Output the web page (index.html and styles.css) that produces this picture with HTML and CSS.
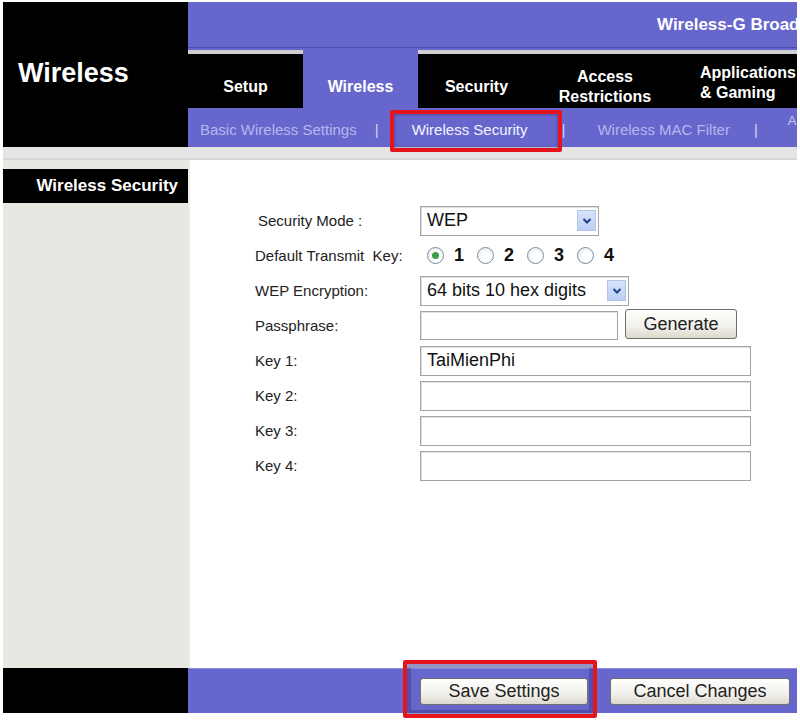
FILE: index.html
```html
<!DOCTYPE html>
<html lang="en">
<head>
<meta charset="utf-8">
<title>Wireless Security</title>
<link rel="stylesheet" href="styles.css">
</head>
<body>
<div class="frame">
  <header class="hdr">
    <div class="brand">Wireless</div>
    <div class="hdr-right">
      <div class="topbar"><span class="product">Wireless-G Broadband Router</span></div>
      <nav class="tabs">
        <div class="tab dark t-setup">Setup</div>
        <div class="tab active t-wireless">Wireless</div>
        <div class="tab dark t-security">Security</div>
        <div class="tab dark t-access">Access<br>Restrictions</div>
        <div class="tab dark t-apps">Applications<br>&amp; Gaming</div>
      </nav>
      <div class="subnav">
        <span class="sub s1">Basic Wireless Settings</span>
        <span class="sep p1">|</span>
        <span class="sub cur">Wireless Security</span>
        <span class="sep p2">|</span>
        <span class="sub s3">Wireless MAC Filter</span>
        <span class="sep p3">|</span>
        <span class="sub s4">Advanced Wireless Settings</span>
      </div>
    </div>
  </header>
  <div class="strip"></div>
  <div class="main">
    <aside class="side"><div class="side-title">Wireless Security</div></aside>
    <section class="content">
      <div class="row">
        <div class="lbl ind">Security Mode :</div>
        <div class="select sel-mode"><span class="val">WEP</span><span class="arrow"><svg viewBox="0 0 10 8" width="10" height="8"><path d="M1.5 2 L5 5.5 L8.5 2" fill="none" stroke="#1d3f8f" stroke-width="2"/></svg></span></div>
      </div>
      <div class="row">
        <div class="lbl">Default Transmit&nbsp; Key:</div>
        <div class="radios">
          <span class="radio"><span class="dot on"></span><b>1</b></span>
          <span class="radio"><span class="dot"></span><b>2</b></span>
          <span class="radio"><span class="dot"></span><b>3</b></span>
          <span class="radio"><span class="dot"></span><b>4</b></span>
        </div>
      </div>
      <div class="row">
        <div class="lbl">WEP Encryption:</div>
        <div class="select sel-enc"><span class="val">64 bits 10 hex digits</span><span class="arrow"><svg viewBox="0 0 10 8" width="10" height="8"><path d="M1.5 2 L5 5.5 L8.5 2" fill="none" stroke="#1d3f8f" stroke-width="2"/></svg></span></div>
      </div>
      <div class="row">
        <div class="lbl">Passphrase:</div>
        <div class="input pass"></div>
        <div class="btn gen">Generate</div>
      </div>
      <div class="row">
        <div class="lbl">Key 1:</div>
        <div class="input key">TaiMienPhi</div>
      </div>
      <div class="row">
        <div class="lbl">Key 2:</div>
        <div class="input key"></div>
      </div>
      <div class="row">
        <div class="lbl">Key 3:</div>
        <div class="input key"></div>
      </div>
      <div class="row">
        <div class="lbl">Key 4:</div>
        <div class="input key"></div>
      </div>
    </section>
  </div>
  <footer class="foot">
    <div class="foot-left"></div>
    <div class="foot-right">
      <div class="btn fbtn save">Save Settings</div>
      <div class="btn fbtn cancel">Cancel Changes</div>
    </div>
  </footer>
</div>
<div class="mark mark-sub"></div>
<div class="mark mark-save"></div>
</body>
</html>
```

FILE: styles.css
```css
html, body {
  margin: 0;
  padding: 0;
  background: #ffffff;
}
body {
  position: relative;
  width: 800px;
  height: 720px;
  overflow: hidden;
  font-family: "Liberation Sans", Arial, sans-serif;
}
.frame {
  margin: 2px 0 0 3px;
  width: 794px;
  height: 711px;
  overflow: hidden;
  display: flex;
  flex-direction: column;
}
.hdr {
  display: flex;
  height: 145px;
  flex: none;
}
.brand {
  width: 170px;
  flex: none;
  background: #000;
  color: #fff;
  font-weight: bold;
  font-size: 27px;
  line-height: 30px;
  padding: 56px 0 0 15px;
  box-sizing: content-box;
}
.hdr-right {
  flex: 1;
  display: flex;
  flex-direction: column;
  min-width: 0;
}
.topbar {
  height: 45px;
  background: #6666cc;
  border-bottom: 1px solid #4c4ca8;
  display: flex;
  align-items: center;
  padding-left: 469px;
  white-space: nowrap;
  overflow: hidden;
}
.product {
  color: #fff;
  font-weight: bold;
  font-size: 17px;
}
.tabs {
  height: 60px;
  display: flex;
  background: #6666cc;
  white-space: nowrap;
}
.tab {
  color: #fff;
  font-weight: bold;
  font-size: 16px;
  line-height: 20px;
  text-align: center;
  display: flex;
  align-items: center;
  justify-content: center;
  box-sizing: border-box;
}
.tab.dark {
  background: #000;
  margin-top: 2px;
  border-top: 4px solid #cfcfcf;
  padding-top: 12px;
}
.tab.active {
  background: #6666cc;
  padding-top: 18px;
}
.t-setup { width: 115px; }
.t-wireless { width: 115px; }
.t-security { width: 117px; }
.t-access { width: 140px; }
.t-apps {
  flex: 1;
  justify-content: flex-start;
  text-align: left;
  padding-left: 25px;
  padding-top: 4px !important;
}
.subnav {
  height: 39px;
  background: #6666cc;
  display: flex;
  align-items: center;
  padding: 3px 0 0 12px;
  box-sizing: border-box;
  white-space: nowrap;
  font-size: 15px;
  color: #b6b6ee;
}
.sub { flex: none; }
.sep {
  flex: none;
  color: #d4d4f6;
  margin: 0 33px 0 18px;
}
.sub.cur { color: #f4f4ff; padding-right: 16px; }
.p2 { margin-right: 32px; }
.p3 { margin-left: 24px; margin-right: 30px; }
.s4 {
  align-self: flex-start;
  margin-top: 2px;
  font-size: 13px;
  color: #c6c6f2;
}
.strip {
  height: 13px;
  flex: none;
  background: #e4e4e2;
  box-shadow: inset 0 -2px 2px -1px #cfcfcf;
}
.main {
  height: 508px;
  flex: none;
  display: flex;
}
.side {
  width: 185px;
  flex: none;
  background: #e8e8e3;
  padding-top: 9px;
  box-sizing: border-box;
}
.side-title {
  background: #000;
  color: #fff;
  height: 34px;
  line-height: 34px;
  font-weight: bold;
  font-size: 17px;
  text-align: right;
  padding-right: 10px;
}
.content {
  flex: 1;
  background: #fff;
  padding: 43px 0 0 65px;
  box-sizing: border-box;
  border-left: 2px solid #ecece8;
}
.row {
  height: 35px;
  display: flex;
  align-items: center;
}
.lbl {
  width: 165px;
  flex: none;
  font-size: 15px;
  color: #222;
}
.lbl.ind { padding-left: 3px; box-sizing: border-box; }
.select, .input {
  height: 30px;
  box-sizing: border-box;
  border: 1px solid #a4a4a4;
  box-shadow: inset 1px 1px 0 #e2e2e2;
  background: #fff;
  display: flex;
  align-items: center;
  padding-left: 6px;
  font-size: 18px;
  color: #111;
  position: relative;
}
.sel-mode { width: 179px; }
.sel-enc { width: 209px; }
.select .val { flex: 1; }
.arrow {
  width: 19px;
  height: 21px;
  margin-right: 2px;
  background: linear-gradient(#d7e3fb, #bccff5);
  border: 1px solid #b3c4e8;
  box-sizing: border-box;
  display: flex;
  align-items: center;
  justify-content: center;
}
.radios {
  display: flex;
  align-items: center;
  padding-left: 7px;
}
.radio {
  display: flex;
  align-items: center;
  margin-right: 12px;
  font-size: 18px;
  color: #111;
}
.radio b { width: 11px; }
.dot {
  width: 17px;
  height: 17px;
  border-radius: 50%;
  border: 1px solid #7a8c9e;
  background: radial-gradient(circle at 60% 60%, #ffffff 30%, #dfe5ea 100%);
  box-sizing: border-box;
  margin-right: 10px;
  display: flex;
  align-items: center;
  justify-content: center;
}
.dot.on::after {
  content: "";
  width: 7px;
  height: 7px;
  border-radius: 50%;
  background: #3b9d45;
}
.pass { width: 198px; height: 29px; }
.key { width: 331px; }
.btn {
  box-sizing: border-box;
  border: 1px solid #6f6f6f;
  border-radius: 3px;
  background: linear-gradient(#ffffff, #f1f0ea 60%, #dcd8cc);
  color: #222;
  font-size: 18px;
  display: flex;
  align-items: center;
  justify-content: center;
}
.gen {
  width: 112px;
  height: 30px;
  margin-left: 7px;
  margin-top: -3px;
}
.foot {
  height: 45px;
  flex: none;
  display: flex;
}
.foot-left {
  width: 185px;
  flex: none;
  background: #000;
}
.foot-right {
  flex: 1;
  background: #6666cc;
  display: flex;
  align-items: center;
  padding-left: 232px;
  gap: 22px;
  border-top: 1px solid #8a8ad8;
}
.fbtn { height: 27px; flex: none; }
.save { width: 168px; }
.cancel { width: 180px; }
.mark {
  position: absolute;
  border: 4px solid #e5141c;
  border-radius: 2px;
  box-sizing: border-box;
}
.mark-sub {
  left: 390px;
  top: 110px;
  width: 172px;
  height: 42px;
  box-shadow: inset 0 0 3px 1px rgba(40, 40, 110, 0.35);
}
.mark-save {
  left: 403px;
  top: 660px;
  width: 194px;
  height: 58px;
  box-shadow: inset 0 0 0 4px rgba(60, 60, 150, 0.55);
}
```
